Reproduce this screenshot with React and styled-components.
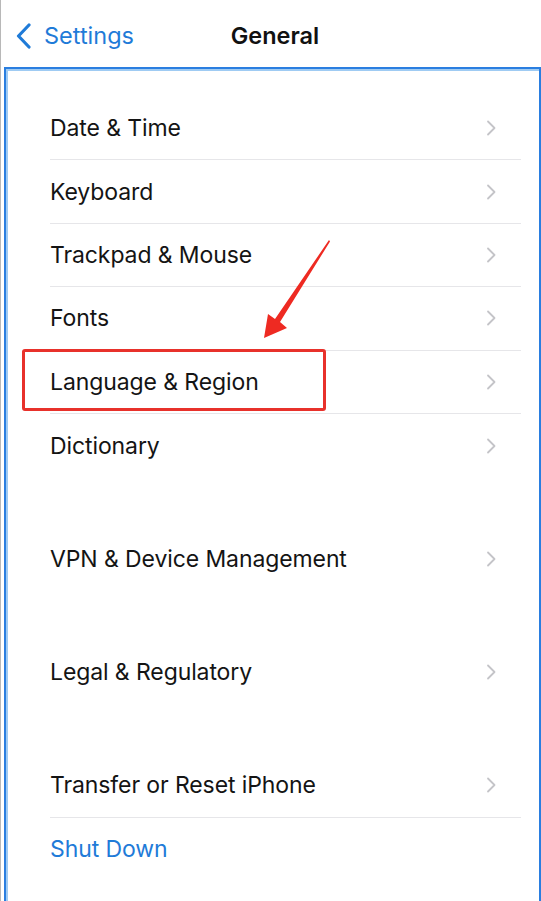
import React from "react";
import styled, { createGlobalStyle } from "styled-components";

const GlobalStyle = createGlobalStyle`
  html, body {
    margin: 0;
    padding: 0;
    background: #ffffff;
  }
  body {
    font-family: "Inter", "Liberation Sans", sans-serif;
    -webkit-font-smoothing: antialiased;
  }
`;

const Page = styled.div`
  width: 541px;
  height: 901px;
  overflow: hidden;
  display: flex;
  flex-direction: column;
  border-left: 1px solid #b8b8b8;
  box-sizing: border-box;
`;

const NavBar = styled.div`
  height: 67px;
  flex-shrink: 0;
  display: grid;
  grid-template-columns: 1fr auto 1fr;
  align-items: center;
  padding: 4px 0 0 14px;
  box-sizing: border-box;
`;

const BackLink = styled.div`
  display: flex;
  align-items: center;
  gap: 11px;
  color: #1f7bd8;
  font-size: 23.5px;
  font-weight: 400;
`;

const Title = styled.div`
  font-size: 23.5px;
  font-weight: 600;
  color: #111;
  margin-left: -6px;
`;

const Frame = styled.div`
  position: relative;
  flex: 1;
  min-height: 0;
  margin-left: 3px;
  border: 2px solid #2a7ee0;
  border-bottom: none;
  border-right: none;
  box-shadow: inset 2px 2px 0 #9fcbf3, inset -2px 0 0 #9fcbf3;
  padding: 28px 4px 0 4px;
  background: #fff;
`;

const RightEdge = styled.div`
  position: absolute;
  right: 0;
  top: -2px;
  bottom: 0;
  width: 2px;
  background: #2a7ee0;
`;

const Group = styled.div`
  margin-bottom: ${(p) => p.$gap ?? 50}px;
`;

const Row = styled.div`
  height: 63.4px;
  margin-left: 40px;
  margin-right: 16px;
  display: flex;
  align-items: center;
  justify-content: space-between;
  box-sizing: border-box;
  border-bottom: ${(p) => (p.$last ? "none" : "1px solid #e6e6e9")};
`;

const Label = styled.span`
  font-size: 23px;
  color: ${(p) => (p.$action ? "#1f7bd8" : "#141414")};
  letter-spacing: -0.1px;
`;

const Chevron = styled.svg`
  width: 10px;
  height: 16px;
  margin-right: 25px;
`;

const Highlight = styled.div`
  position: absolute;
  left: 16px;
  top: 280px;
  width: 298px;
  height: 56px;
  border: 3px solid #e8312b;
  border-radius: 3px;
`;

const Arrow = styled.svg`
  position: absolute;
  left: 240px;
  top: 168px;
  width: 90px;
  height: 110px;
`;

const groups = [
  ["Date & Time", "Keyboard", "Trackpad & Mouse", "Fonts", "Language & Region", "Dictionary"],
  ["VPN & Device Management"],
  ["Legal & Regulatory"],
];

function ChevronIcon() {
  return (
    <Chevron viewBox="0 0 10 16">
      <path d="M2 1.5 L8.5 8 L2 14.5" fill="none" stroke="#c4c4c8" strokeWidth="1.8" strokeLinecap="round" strokeLinejoin="round" />
    </Chevron>
  );
}

export default function App() {
  return (
    <>
      <GlobalStyle />
      <Page>
        <NavBar>
          <BackLink>
            <svg width="18" height="26" viewBox="0 0 18 26">
              <path d="M14 2 L3.5 13 L14 24" fill="none" stroke="#1f7bd8" strokeWidth="3.2" strokeLinecap="round" strokeLinejoin="round" />
            </svg>
            Settings
          </BackLink>
          <Title>General</Title>
          <div />
        </NavBar>
        <Frame>
          <RightEdge />
          {groups.map((items, gi) => (
            <Group key={gi}>
              {items.map((item, i) => (
                <Row key={item} $last={i === items.length - 1}>
                  <Label>{item}</Label>
                  <ChevronIcon />
                </Row>
              ))}
            </Group>
          ))}
          <Group $gap={0}>
            <Row>
              <Label>Transfer or Reset iPhone</Label>
              <ChevronIcon />
            </Row>
            <Row $last>
              <Label $action>Shut Down</Label>
            </Row>
          </Group>
          <Highlight />
          <Arrow viewBox="0 0 90 110">
            <path d="M83 3 L84 4.5 L34 85 L41 91 L18 101 L22 77 L29 82 Z" fill="#ee2a22" />
          </Arrow>
        </Frame>
      </Page>
    </>
  );
}
